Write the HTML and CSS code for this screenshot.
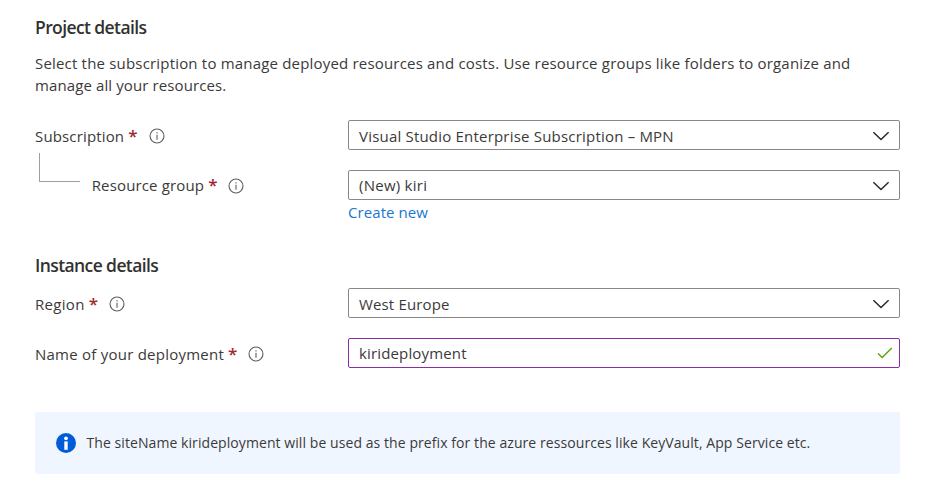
FILE: index.html
```
<!DOCTYPE html>
<html lang="en">
<head>
<meta charset="utf-8">
<title>Project details</title>
<link rel="stylesheet" href="styles.css">
</head>
<body>
<svg class="defs" width="0" height="0" aria-hidden="true">
  <symbol id="info" viewBox="0 0 16 16"><circle cx="8" cy="8" r="7" fill="none" stroke="#605e5c" stroke-width="1.1"/><path d="M8 6.7v5M8 4.2v1.2" stroke="#605e5c" stroke-width="1.1"/></symbol>
  <symbol id="chevron" viewBox="0 0 18 10"><path d="M1.4 1.2 9 8.6l7.600-7.400" fill="none" stroke="#292827" stroke-width="1.45"/></symbol>
</svg>
<main class="form">
  <section>
    <h2 class="project-title">Project details</h2>
    <p class="intro"><span class="line-one">Select the subscription to manage deployed resources and costs. Use resource groups like folders to organize and</span><br><span class="line-two">manage all your resources.</span></p>
    <div class="row">
      <div class="label"><span class="subscription">Subscription</span><b>*</b><svg class="info"><use href="#info"/></svg></div>
      <div class="field"><span class="vs">Visual Studio Enterprise Subscription – MPN</span><svg class="chevron"><use href="#chevron"/></svg></div>
    </div>
    <div class="row group-row">
      <div class="label nested"><i class="branch"></i><span class="group">Resource group</span><b>*</b><svg class="info"><use href="#info"/></svg></div>
      <div class="field"><span class="kiri">(New) kiri</span><svg class="chevron"><use href="#chevron"/></svg></div>
    </div>
    <a class="create"><span>Create new</span></a>
  </section>
  <section>
    <h2 class="instance-title">Instance details</h2>
    <div class="row">
      <div class="label"><span class="region">Region</span><b>*</b><svg class="info"><use href="#info"/></svg></div>
      <div class="field"><span class="west">West Europe</span><svg class="chevron"><use href="#chevron"/></svg></div>
    </div>
    <div class="row name-row">
      <div class="label"><span class="name">Name of your deployment</span><b>*</b><svg class="info"><use href="#info"/></svg></div>
      <div class="field active"><span class="deployment">kirideployment</span><svg class="check" viewBox="0 0 16 12"><path d="M1 6.500 5.200 10.500 14.800 1" fill="none" stroke="#57a300" stroke-width="1.35"/></svg></div>
    </div>
  </section>
  <aside class="notice">
    <svg class="notice-icon" viewBox="0 0 20 20"><circle cx="10" cy="10" r="10" fill="#015cda"/><circle cx="10" cy="5.300" r="1.900" fill="#fff"/><path d="M8.300 8.400h3.400v8.400H8.300z" fill="#fff"/></svg>
    <span>The siteName kirideployment will be used as the prefix for the azure ressources like KeyVault, App Service etc.</span>
  </aside>
</main>
</body>
</html>
```
FILE: styles.css
```
* { box-sizing: border-box; }
body { margin: 0; background: #fff; color: #3b3a39; font: 400 15px/22px "Open Sans", "Noto Sans", sans-serif; letter-spacing: .15px; }
.defs { display: block; position: absolute; }
.form { width: 865px; margin-left: 35px; padding-top: 15px; white-space: nowrap; }
h2 { margin: 0; color: #323130; font-size: 17.5px; line-height: 24px; font-weight: 600; letter-spacing: -.6px; }
.intro { margin: 13px 0 24px; }
.line-one { letter-spacing: .187px; }
.line-two { letter-spacing: .11px; }
.row { display: flex; height: 30px; }
.group-row, .name-row { margin-top: 20px; }
.label { display: flex; width: 313px; align-items: center; padding-top: 1px; }
.label b { color: #a4262c; margin-left: 4px; font-size: 17px; font-weight: 600; letter-spacing: 0; }
.info { width: 16px; height: 16px; margin-left: 11px; }
.nested { padding-top: 0; }
.nested .info { margin-top: 2px; }
.region { letter-spacing: .3px; }
.name { letter-spacing: .24px; }
.branch { width: 41px; height: 29px; margin: -35px 11.700px 0 4px; border: solid #a19f9d; border-width: 0 0 1px 1px; }
.field { display: flex; flex: 1; align-items: center; justify-content: space-between; padding: 0 9px 0 10px; border: 1px solid #8a8886; border-radius: 2px; }
.vs { letter-spacing: .2px; }
.kiri { letter-spacing: .25px; }
.vs, .west { padding-top: 2px; }
.chevron { width: 18px; height: 10px; margin-top: 1px; }
.check { width: 16px; height: 12px; margin-right: -3px; }
.active { border-color: #8a2da5; }
.create { display: block; margin-top: 1px; margin-left: 313px; color: #1976d2; letter-spacing: .08px; }
.instance-title { margin-top: 30px; margin-bottom: 11px; }
.notice { display: flex; align-items: center; height: 62px; margin-top: 44px; padding-left: 21px; border-radius: 2px; background: #f0f6ff; font-size: 14px; letter-spacing: .073px; }
.notice-icon { width: 20px; height: 20px; margin-right: 10.500px; }
```
